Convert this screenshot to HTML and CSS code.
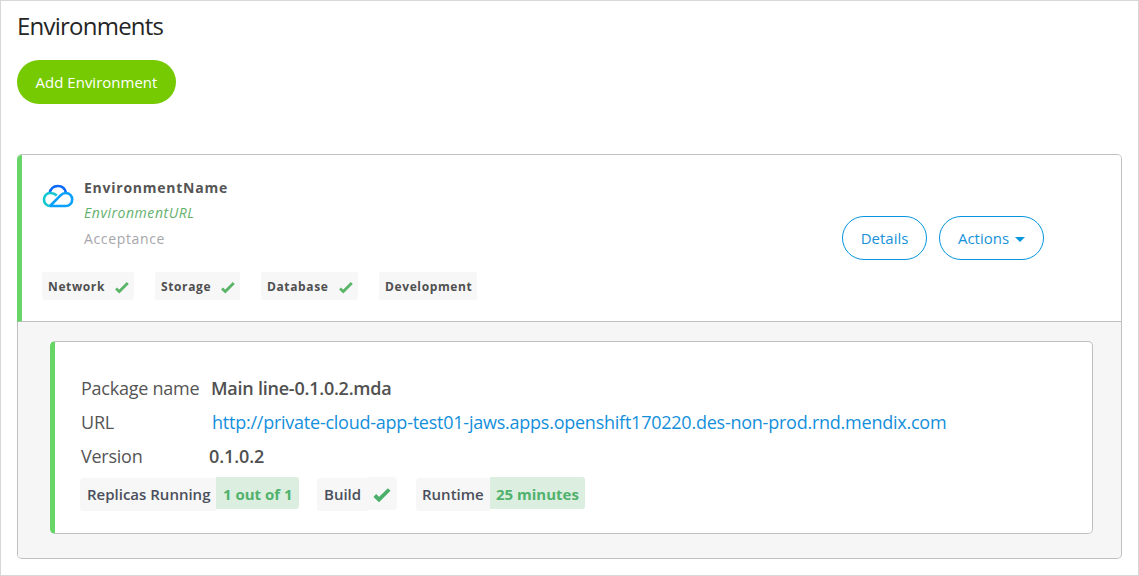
FILE: index.html
```html
<!DOCTYPE html>
<html lang="en">
<head>
<meta charset="utf-8">
<title>Environments</title>
<link rel="stylesheet" href="styles.css">
</head>
<body>
<main class="page">
  <h1 class="title">Environments</h1>
  <button class="btn btn-primary">Add Environment</button>
  <section class="environment">
    <header class="environment-header">
      <div class="summary">
        <div class="identity">
          <svg class="cloud" viewBox="0 0 32 24" fill="none" stroke-width="2.6">
            <path class="cloud-top" d="M7.5 9.5C8.5 4.8 11.7 2 15.8 2c4.300 0 7.400 2.800 8.300 7"/>
            <path class="cloud-left" d="M14.800 11.500C12.900 9.800 10.800 9 8.300 9 4.700 9 2 11.800 2 15.400S4.700 22 8.300 22"/>
            <path class="cloud-right" d="M8 22h15.700c3.800 0 6.500-2.900 6.500-6.500S27.500 9 23.800 9c-2.300 0-3.800.8-5.300 2.300L8 22"/>
          </svg>
          <div class="names">
            <div class="name"><span>EnvironmentName</span></div>
            <div class="env-url"><span>EnvironmentURL</span></div>
            <div class="purpose"><span>Acceptance</span></div>
          </div>
        </div>
        <div class="checks">
          <div class="check network"><span>Network</span><svg class="tick" viewBox="0 0 16 14"><path d="M2 8.500 5.300 11.500 13.800 3"/></svg></div>
          <div class="check storage"><span>Storage</span><svg class="tick" viewBox="0 0 16 14"><path d="M2 8.500 5.300 11.500 13.800 3"/></svg></div>
          <div class="check database"><span>Database</span><svg class="tick" viewBox="0 0 16 14"><path d="M2 8.500 5.300 11.500 13.800 3"/></svg></div>
          <div class="check development"><span>Development</span></div>
        </div>
      </div>
      <div class="actions">
        <button class="btn btn-outline details">Details</button>
        <button class="btn btn-outline menu">Actions<svg class="caret" viewBox="0 0 10 5"><path d="M0 0h10L5 5z"/></svg></button>
      </div>
    </header>
    <div class="environment-body">
      <article class="package">
        <dl class="facts">
          <dt>Package name</dt><dd class="strong"><span>Main line-0.1.0.2.mda</span></dd>
          <dt>URL</dt><dd class="link"><span>http://private-cloud-app-test01-jaws.apps.openshift170220.des-non-prod.rnd.mendix.com</span></dd>
          <dt>Version</dt><dd class="strong version"><span>0.1.0.2</span></dd>
        </dl>
        <div class="stats">
          <div class="stat replicas"><span class="label">Replicas Running</span><span class="value">1 out of 1</span></div>
          <div class="stat build"><span class="label">Build</span><span class="mark"><svg class="tick" viewBox="0 0 18 16"><path d="M1.800 8.500 6 12.500 16.200 2.500"/></svg></span></div>
          <div class="stat runtime"><span class="label">Runtime</span><span class="value">25 minutes</span></div>
        </div>
      </article>
    </div>
  </section>
</main>
</body>
</html>
```

FILE: styles.css
```css
* { box-sizing: border-box; }
body { margin: 0; background: #fff; font-family: "Open Sans", sans-serif; color: #555; }
.page { height: 576px; border: 1px solid #d7d7d7; padding: 7px 16px 0; display: flex; flex-direction: column; align-items: flex-start; white-space: nowrap; }
.title { margin: 0 0 16px; height: 36px; line-height: 36px; font-size: 24px; font-weight: 400; letter-spacing: -.77px; color: #252525; }
.btn { display: flex; align-items: center; justify-content: center; height: 44px; padding: 0; border-radius: 22px; font: 15px "Open Sans", sans-serif; }
.btn-primary { width: 159px; border: 0; background: #76ca02; color: #fff; }
.btn-outline { border: 1px solid #0595db; background: #fff; color: #1992da; }
.details { width: 85px; }
.menu { width: 105px; gap: 6px; }
.caret { width: 10px; height: 5px; fill: #0595db; margin-top: 3px; }
.environment { width: 1105px; height: 405px; margin-top: 50px; border: 1px solid #c0c0c3; border-left: 0; border-radius: 5px; background: #f6f6f6; overflow: hidden; }
.environment-header { height: 167px; border-left: 5px solid #67d568; border-bottom: 1px solid #c0c0c3; background: #fff; display: flex; justify-content: space-between; padding-right: 77px; }
.summary { padding: 20px 0 0 20px; }
.identity { display: flex; gap: 10px; }
.cloud { width: 32px; height: 24px; margin-top: 9px; }
.cloud-top { stroke: #0869fb; }
.cloud-left { stroke: #12c8d0; }
.cloud-right { stroke: #0aa0fc; }
.names { font-size: 14px; }
.name { height: 26px; line-height: 26px; font-weight: 700; color: #555; letter-spacing: .75px; }
.env-url { height: 25px; line-height: 24px; font-style: italic; color: #62b16c; letter-spacing: .55px; }
.purpose { height: 26px; line-height: 26px; color: #a6a6ab; letter-spacing: .65px; }
.checks { display: flex; gap: 21px; margin-top: 20px; }
.check { display: flex; align-items: center; justify-content: space-between; height: 28px; padding: 1px 4px 0 6px; border-radius: 2px; background: #f7f7f7; color: #4f4f4f; font-size: 12px; font-weight: 700; letter-spacing: .62px; }
.tick { width: 16px; height: 14px; fill: none; stroke: #5bb568; stroke-width: 2.800; }
.network { width: 92px; }
.storage { width: 85px; }
.database { width: 97px; }
.development { width: 98px; }
.actions { display: flex; gap: 12px; padding-top: 61px; }
.environment-body { height: 237px; border-left: 1px solid #c0c0c3; padding: 19px 28px 0 32px; }
.package { height: 193px; border: 1px solid #c0c0c3; border-left: 5px solid #67d568; border-radius: 5px; background: #fff; padding: 29px 0 0 25px; }
.facts { display: grid; grid-template-columns: 131px auto; grid-auto-rows: 34px; margin: 0; font-size: 18px; line-height: 34px; letter-spacing: -.24px; }
.facts dt { padding-left: 1px; }
.facts dd { margin: 0; }
.strong { font-weight: 600; color: #505050; }
.facts .version { margin-left: -2px; letter-spacing: -.1px; }
.link { padding-left: 1px; color: #148fdb; }
.stats { display: flex; margin-top: 4px; font-size: 15px; font-weight: 600; color: #4b4f5c; }
.stat { display: flex; align-items: flex-start; }
.label { height: 33px; line-height: 33px; margin-top: 1px; padding-left: 7px; border-radius: 3px 0 0 3px; background: #f7f7f7; }
.value { height: 32px; line-height: 35px; border-radius: 0 3px 3px 0; background: #dceee0; color: #50b26c; font-weight: 700; padding-left: 7px; }
.mark { width: 30px; height: 33px; padding: 10px 0 0 6px; border-radius: 0 3px 3px 0; background: #f7f7f7; }
.mark .tick { display: block; width: 18px; height: 16px; stroke: #4aaf6a; stroke-width: 3.800; }
.replicas .label { width: 136px; }
.replicas .value { width: 83px; }
.build { margin-left: 18px; }
.build .label { width: 50px; }
.runtime { margin-left: 19px; }
.runtime .label { width: 74px; padding-left: 6px; }
.runtime .value { width: 95px; padding-left: 6px; }
```
